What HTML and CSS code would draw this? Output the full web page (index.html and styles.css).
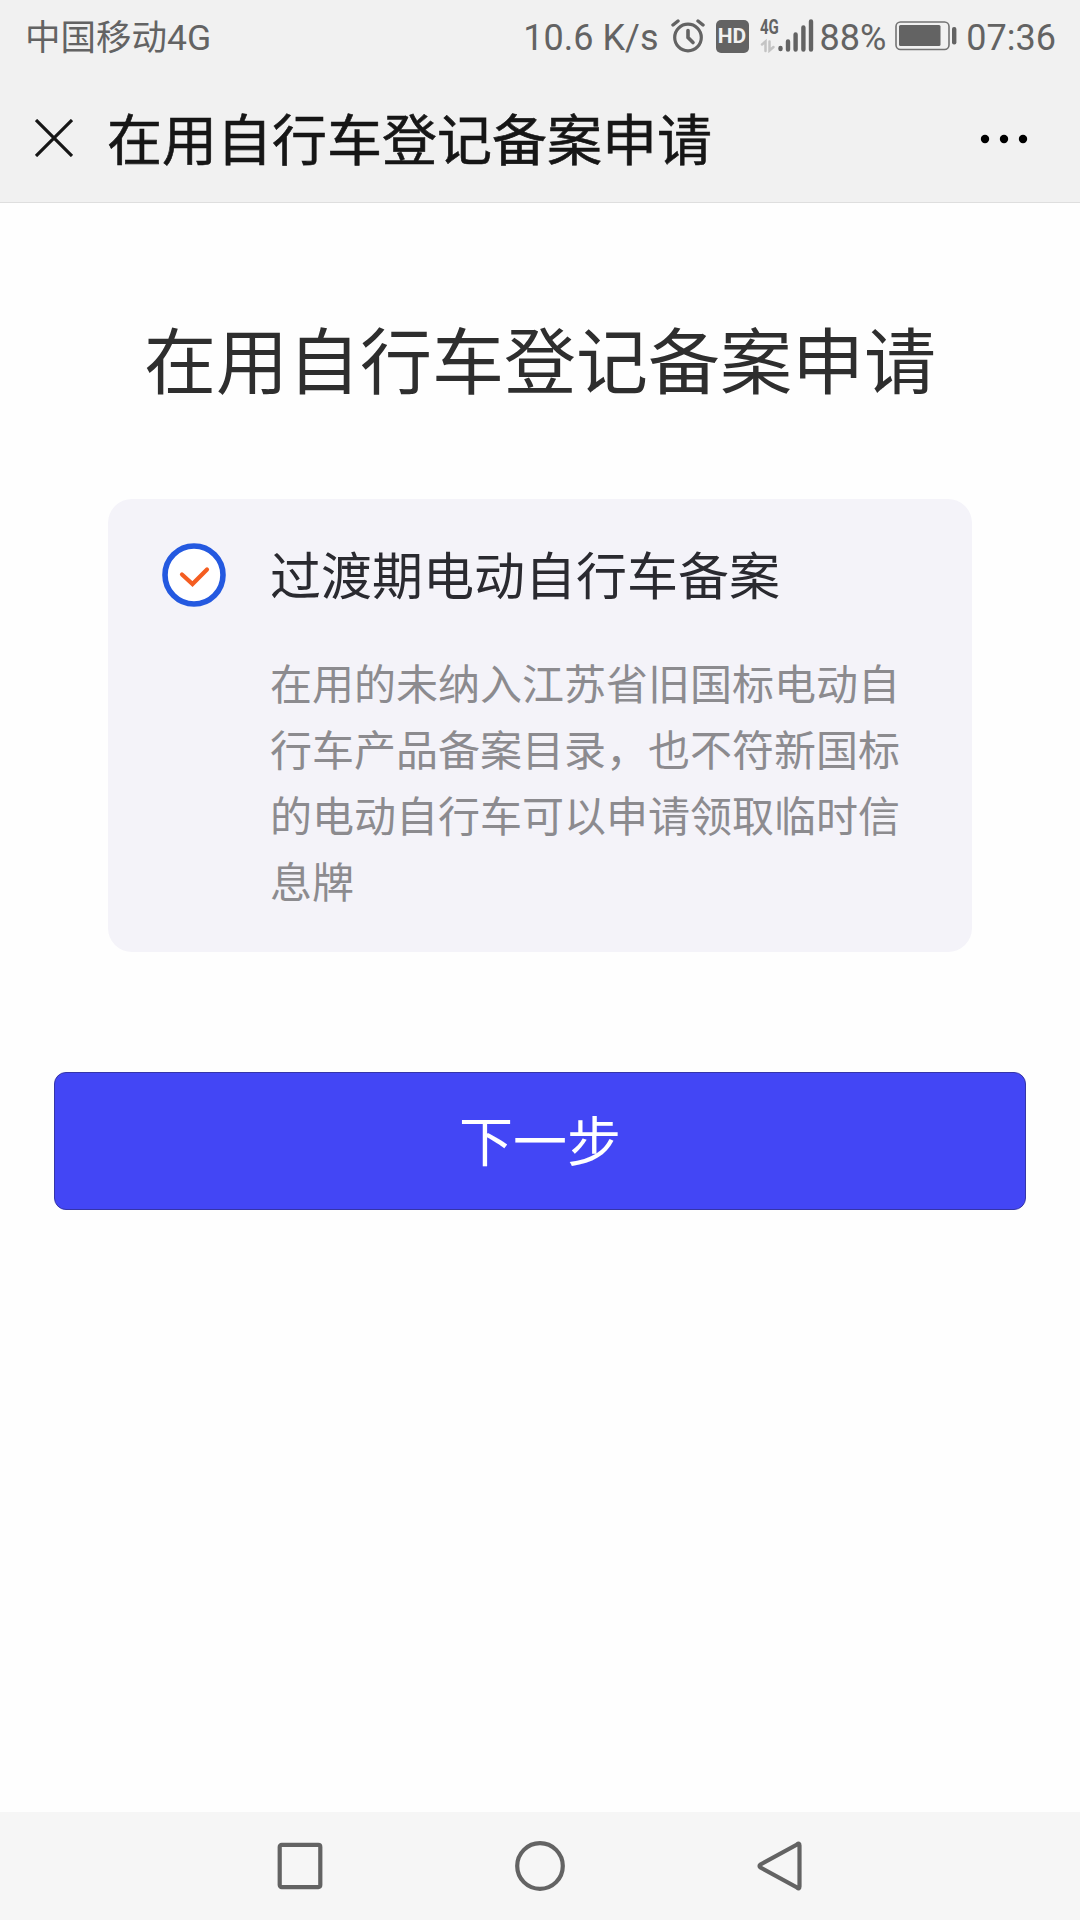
FILE: index.html
```
<!DOCTYPE html>
<html lang="zh-CN">
<head>
  <meta charset="UTF-8" />
  <meta name="viewport" content="width=device-width, initial-scale=1.0" />
  <title>在用自行车登记备案申请</title>
  <link rel="stylesheet" href="styles.css">
</head>
<body>
  <div class="status-bar">
    <span class="carrier">中国移动4G</span>
    <div class="status-right">
      <span class="speed">10.6 K/s</span>
      <svg class="alarm" width="34" height="34" viewBox="0 0 34 34" fill="none" stroke="#636363" stroke-linecap="round">
        <circle cx="17" cy="18.5" r="13.3" stroke-width="3.2"/>
        <path d="M17 11.5v7l5 5" stroke-width="3.6"/>
        <path d="M2 6L7 2M27 2l5 4" stroke-width="3.4"/>
      </svg>
      <span class="hd">HD</span>
      <div class="network">
        <span class="network-type">4G</span>
        <svg width="54" height="34" viewBox="0 0 54 34" stroke-linecap="round">
          <path d="M2 25.5l3.500-3v9.500M9.500 22.500v9l4-3.500" fill="none" stroke="#c4c4c4" stroke-width="2.500"/>
          <path d="M20.500 29v1M28 22.500v8M35.600 15.500v15M43.400 8.500v22M51 2.500v28" stroke="#636363" stroke-width="4.400"/>
        </svg>
      </div>
      <span class="percent">88%</span>
      <svg class="battery" width="62" height="30" viewBox="0 0 62 30">
        <rect x="1" y="1" width="53" height="27.500" rx="4.500" fill="none" stroke="#737373" stroke-width="1.600"/>
        <rect x="4" y="4" width="41.500" height="21" rx="1.500" fill="#636363"/>
        <rect x="57" y="6" width="4.400" height="17.500" rx="2" fill="#636363"/>
      </svg>
      <span class="clock">07:36</span>
    </div>
  </div>

  <div class="header">
    <svg class="close" width="38" height="38" viewBox="0 0 38 38" stroke="#161616" stroke-width="3.200">
      <path d="M1 1l36 36M37 1L1 37"/>
    </svg>
    <span class="header-title">在用自行车登记备案申请</span>
    <svg class="more" width="48" height="10" viewBox="0 0 48 10">
      <circle cx="5" cy="5" r="4.200"/>
      <circle cx="24" cy="5" r="4.200"/>
      <circle cx="43" cy="5" r="4.200"/>
    </svg>
  </div>

  <main class="content">
    <h1>在用自行车登记备案申请</h1>

    <div class="card">
      <svg class="check" width="64" height="64" viewBox="0 0 64 64">
        <circle cx="32" cy="32" r="29" fill="#fff" stroke="#2459e0" stroke-width="5.600"/>
        <path d="M20 31.500l10.500 9.500L45 26.500" fill="none" stroke="#f45d21" stroke-width="4.200" stroke-linecap="round"/>
      </svg>
      <div class="card-text">
        <h2>过渡期电动自行车备案</h2>
        <p>在用的未纳入江苏省旧国标电动自行车产品备案目录，也不符新国标的电动自行车可以申请领取临时信息牌</p>
      </div>
    </div>

    <button class="next-btn">下一步</button>
  </main>

  <div class="nav-bar">
    <svg width="50" height="54" viewBox="0 0 50 54">
      <rect x="4.700" y="5.900" width="40.600" height="42.200" rx="2" />
    </svg>
    <svg width="54" height="54" viewBox="0 0 54 54">
      <circle cx="27" cy="27" r="22.800"/>
    </svg>
    <svg width="50" height="54" viewBox="0 0 50 54">
      <path d="M42 5.500Q44.500 3.500 44.500 6.500V47.500Q44.500 50.500 42 48.500L5.500 28.500Q3.500 27 5.500 25.500Z"/>
    </svg>
  </div>
</body>
</html>
```
FILE: styles.css
```
* {
  box-sizing: border-box;
}
body {
  margin: 0;
  height: 1920px;
  display: flex;
  flex-direction: column;
  font-family: Roboto, "Noto Sans CJK SC", sans-serif;
  background-color: #fefefe;
}
.status-bar {
  height: 72px;
  padding: 0 24px 0 25px;
  display: flex;
  align-items: center;
  justify-content: space-between;
  background-color: #f1f1f1;
  color: #636363;
  font-size: 36px;
  line-height: 72px;
  white-space: nowrap;
}
.carrier {
  padding-top: 4px;
  font-size: 35.500px;
}
.status-right {
  display: flex;
  align-items: center;
}
.speed,
.percent,
.clock {
  padding-top: 4px;
}
.alarm {
  margin-left: 12px;
}
.hd {
  width: 33px;
  height: 33px;
  margin-left: 11px;
  border-radius: 5px;
  background-color: #636363;
  color: #f1f1f1;
  font-size: 21px;
  font-weight: bold;
  line-height: 33px;
  text-align: center;
}
.network {
  position: relative;
  display: flex;
  margin-left: 11px;
}
/* network label sits over the signal bars */
.network-type {
  position: absolute;
  left: 0;
  top: -1px;
  font-size: 20px;
  font-weight: bold;
  line-height: 18px;
  transform: scaleX(0.75);
  transform-origin: left;
}
.percent {
  margin-left: 6px;
}
.battery {
  margin-left: 9px;
}
.clock {
  margin-left: 9px;
}
.header {
  height: 131px;
  padding: 2px 52px 0 35px;
  display: flex;
  align-items: center;
  background-color: #f1f1f1;
  border-bottom: 1px solid #dedede;
}
.header-title {
  margin-left: 34px;
  padding-top: 6px;
  color: #161616;
  font-size: 55px;
  line-height: 80px;
  -webkit-text-stroke: 0.6px #161616;
}
.more {
  margin-left: auto;
  margin-top: 2px;
}
.content {
  flex: 1;
  padding: 111px 54px 0;
}
h1 {
  margin: 0;
  color: #2e2e2e;
  font-size: 72px;
  font-weight: 400;
  line-height: 100px;
  text-align: center;
}
.card {
  height: 453px;
  margin: 85px 54px 0;
  padding: 44px 54px 0;
  display: flex;
  align-items: flex-start;
  border-radius: 24px;
  background-color: #f4f3f9;
}
.check {
  flex: none;
}
.card-text {
  width: 632px;
  margin-left: 44px;
  padding-top: 3px;
}
h2 {
  margin: 0;
  color: #2a2a30;
  font-size: 51px;
  font-weight: 400;
  line-height: 64px;
}
p {
  margin: 43px 0 0;
  color: #8c8b8f;
  font-size: 42px;
  line-height: 66px;
}
.next-btn {
  display: block;
  width: 100%;
  height: 138px;
  margin-top: 120px;
  padding: 0 0 6px;
  border: 1px solid #3535a8;
  border-radius: 12px;
  background-color: #4346f5;
  color: white;
  font-family: inherit;
  font-size: 54px;
}
.nav-bar {
  height: 108px;
  display: flex;
  align-items: center;
  justify-content: center;
  gap: 188px;
  background-color: #f6f6f6;
}
.nav-bar svg {
  fill: none;
  stroke: #636363;
  stroke-width: 4.200;
}
```
